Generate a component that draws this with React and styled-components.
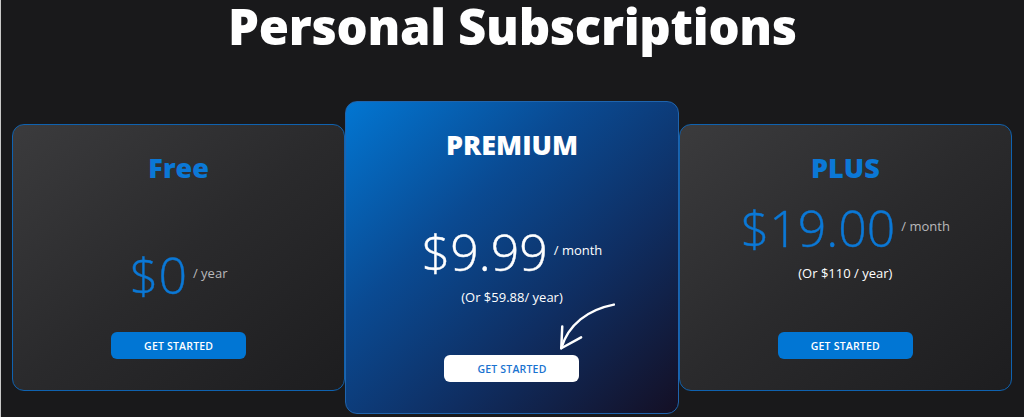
import styled, { createGlobalStyle } from "styled-components";

const GlobalStyle = createGlobalStyle`
    html, body {
        margin: 0;
        padding: 0;
        background: #19191b;
    }
    body {
        font-family: "Open Sans", "Liberation Sans", sans-serif;
        border-left: 1px solid #c9c9c9;
        min-height: 417px;
        box-sizing: border-box;
    }
`;

const plans = [
    {
        name: "Free",
        price: "$0",
        period: "/ year",
        offset: 68,
    },
    {
        name: "PREMIUM",
        price: "$9.99",
        period: "/ month",
        note: "(Or $59.88/ year)",
        featured: true,
        offset: 68,
    },
    {
        name: "PLUS",
        price: "$19.00",
        period: "/ month",
        note: "(Or $110 / year)",
        offset: 21,
    },
];

const Arrow = () => (
    <ArrowSvg viewBox="0 0 334 313">
        <path d="M 270 204 C 244 209, 224 224, 217 248" />
        <path d="M 218 226 L 217 248 L 237 237" />
    </ArrowSvg>
);

const App = () => {
    return (
        <>
            <GlobalStyle />
            <Page>
                <Heading>Personal Subscriptions</Heading>
                <Cards>
                    {plans.map((plan) => (
                        <Card key={plan.name} featured={plan.featured}>
                            <PlanName featured={plan.featured}>{plan.name}</PlanName>
                            <PriceRow offset={plan.offset}>
                                <Price featured={plan.featured}>{plan.price}</Price>
                                <Period featured={plan.featured}>{plan.period}</Period>
                            </PriceRow>
                            {plan.note && <Note>{plan.note}</Note>}
                            <Button featured={plan.featured}>GET STARTED</Button>
                            {plan.featured && <Arrow />}
                        </Card>
                    ))}
                </Cards>
            </Page>
        </>
    );
};

export default App;

const Page = styled.div`
    display: flex;
    flex-direction: column;
    align-items: center;
    padding-top: 2px;
`;

const Heading = styled.h1`
    margin: 0;
    font-size: 49px;
    line-height: 49px;
    font-weight: 800;
    color: #ffffff;
    letter-spacing: -0.3px;
`;

const Cards = styled.div`
    display: flex;
    align-items: center;
    width: 1000px;
    margin-top: 50px;
    margin-right: 1px;
`;

const Card = styled.div`
    position: relative;
    flex: 1;
    display: flex;
    flex-direction: column;
    align-items: center;
    box-sizing: border-box;
    height: ${(p) => (p.featured ? "313px" : "267px")};
    padding: 29px 0 31px;
    border-radius: 12px;
    border: 1px solid ${(p) => (p.featured ? "#1f64ad" : "#0f62b0")};
    background: ${(p) =>
        p.featured
            ? "linear-gradient(to bottom right, #0276d2 0%, #0a4a92 35%, #0f2e62 65%, #140f24 100%)"
            : "linear-gradient(to bottom right, #3b3b3d 0%, #2a2a2c 50%, #1d1d1f 100%)"};
`;

const PlanName = styled.div`
    font-size: 27px;
    line-height: 28px;
    font-weight: 800;
    color: ${(p) => (p.featured ? "#ffffff" : "#0b78d6")};
`;

const PriceRow = styled.div`
    display: flex;
    align-items: center;
    margin-top: ${(p) => p.offset}px;
`;

const Price = styled.span`
    font-size: 50px;
    line-height: 50px;
    font-weight: 300;
    -webkit-text-stroke: 0.4px currentColor;
    color: ${(p) => (p.featured ? "#ffffff" : "#0b78d6")};
`;

const Period = styled.span`
    margin-left: 6px;
    margin-bottom: 4px;
    font-size: 13px;
    color: ${(p) => (p.featured ? "#ffffff" : "#b9b9bb")};
`;

const Note = styled.div`
    margin-top: 12px;
    font-size: 13px;
    line-height: 17px;
    color: #ffffff;
`;

const Button = styled.button`
    margin-top: auto;
    width: 135px;
    height: 27px;
    border: none;
    border-radius: 6px;
    font-family: inherit;
    font-size: 10.5px;
    font-weight: 600;
    letter-spacing: 0.2px;
    background: ${(p) => (p.featured ? "#ffffff" : "#0176d4")};
    color: ${(p) => (p.featured ? "#1a73d0" : "#ffffff")};
`;

const ArrowSvg = styled.svg`
    position: absolute;
    inset: 0;
    width: 100%;
    height: 100%;
    pointer-events: none;
    fill: none;
    stroke: #ffffff;
    stroke-width: 2.5;
    stroke-linecap: round;
    stroke-linejoin: round;
`;
